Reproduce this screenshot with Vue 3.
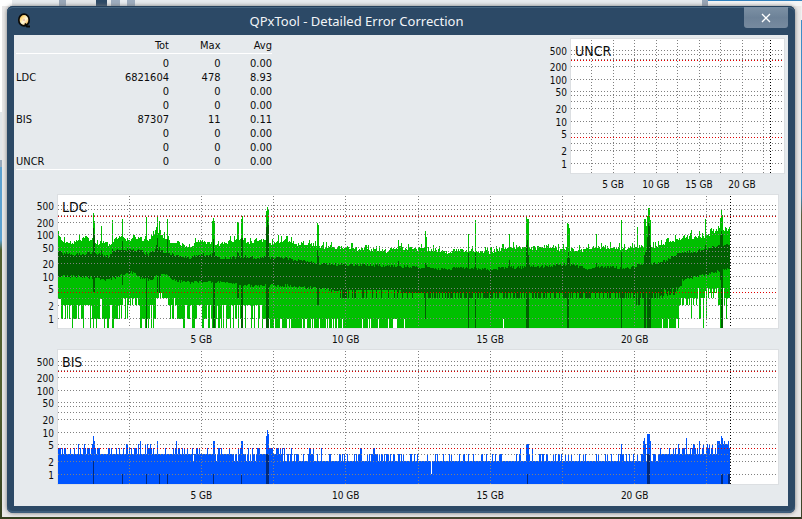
<script setup>
import { h } from 'vue'

const rows = [
  ['', '0', '0', '0.00'],
  ['LDC', '6821604', '478', '8.93'],
  ['', '0', '0', '0.00'],
  ['', '0', '0', '0.00'],
  ['BIS', '87307', '11', '0.11'],
  ['', '0', '0', '0.00'],
  ['', '0', '0', '0.00'],
  ['UNCR', '0', '0', '0.00'],
]

// Deterministic generator, so that every render draws the same scan
function generator(seed) {
  let s = seed
  return () => {
    s = (s * 1664525 + 1013904223) % 4294967296
    return s / 4294967296
  }
}

// Linear interpolation through a list of [sample, level] points
function curve(points) {
  return (x) => {
    let i = 1
    while (i < points.length - 1 && points[i][0] < x) i++
    const [x0, y0] = points[i - 1]
    const [x1, y1] = points[i]
    const t = Math.min(1, Math.max(0, (x - x0) / (x1 - x0)))
    return y0 + (y1 - y0) * t
  }
}

const bar = (x, top, bottom) => (bottom > top ? `M${x} ${top}h1V${bottom}h-1z` : '')

const SAMPLES = 672

function buildLdc() {
  const rnd = generator(77)
  const peak = curve([[0, 38], [4, 46], [12, 48], [22, 44], [29, 42], [34, 48], [40, 50], [45, 46], [50, 50], [57, 44], [64, 42], [71, 46], [75, 41], [82, 44], [88, 46], [94, 41], [100, 39], [107, 43], [112, 48], [118, 46], [124, 50], [132, 51], [137, 48], [142, 46], [154, 48], [164, 49], [172, 46], [182, 46], [190, 49], [200, 44], [214, 49], [222, 46], [232, 46], [239, 51], [245, 48], [252, 50], [267, 52], [292, 53], [302, 55], [330, 56], [340, 52], [347, 54], [367, 54], [390, 58], [400, 55], [412, 56], [432, 57], [454, 52], [474, 53], [492, 51], [498, 54], [522, 55], [542, 53], [552, 52], [567, 54], [577, 52], [597, 52], [607, 49], [614, 46], [625, 42], [632, 43], [648, 43], [653, 38], [662, 35], [668, 34], [672, 34]])
  const upper = curve([[0, 56], [4, 58], [22, 59], [34, 57], [42, 59], [50, 61], [56, 55], [72, 54], [82, 54], [89, 60], [97, 54], [105, 56], [110, 58], [120, 60], [132, 62], [142, 59], [152, 60], [164, 63], [177, 62], [192, 62], [222, 62], [234, 64], [254, 67], [267, 69], [317, 70], [367, 72], [390, 74], [402, 72], [432, 74], [452, 72], [482, 71], [507, 69], [517, 70], [527, 73], [542, 71], [557, 72], [572, 73], [580, 69], [597, 68], [607, 65], [617, 60], [622, 57], [637, 56], [647, 55], [652, 52], [662, 50], [672, 49]])
  const lower = curve([[0, 81], [17, 81], [37, 82], [47, 85], [57, 82], [67, 78], [75, 77], [82, 82], [92, 84], [100, 80], [109, 79], [115, 85], [132, 87], [152, 86], [167, 87], [182, 90], [232, 90], [244, 92], [262, 92], [272, 95], [300, 95], [340, 97], [362, 98], [597, 98], [606, 95], [617, 93], [622, 85], [632, 83], [642, 80], [652, 78], [662, 75], [672, 72]])
  const spikes = {
    35: [18, 33, 97], 36: [26, 40, 97], 43: [31, 55, 84], 54: [25, 54, 82], 64: [24, 46, 90],
    88: [22, 57, 133], 97: [35, 54, 81], 98: [32, 50, 80], 99: [22, 43, 98], 101: [26, 52, 98], 109: [24, 44, 80],
    154: [26, 58, 87], 155: [23, 44, 133], 156: [26, 57, 133],
    179: [27, 57, 103], 180: [28, 58, 103], 183: [24, 43, 133], 184: [21, 43, 133], 187: [43, 60, 90],
    208: [16, 32, 133], 209: [12, 25, 133], 210: [15, 30, 133], 220: [40, 62, 90],
    259: [28, 55, 110], 260: [30, 61, 110], 340: [45, 66, 98],
    367: [36, 68, 124], 368: [42, 70, 98], 410: [39, 58, 133], 417: [25, 58, 133], 451: [39, 65, 98],
    468: [22, 50, 133], 469: [24, 45, 133], 470: [24, 60, 133],
    509: [28, 63, 133], 510: [29, 57, 133], 511: [33, 63, 98], 538: [39, 68, 98], 563: [25, 57, 133], 579: [32, 68, 98],
    586: [24, 60, 133], 587: [24, 57, 133], 588: [31, 55, 98], 589: [21, 42, 133], 590: [13, 28, 133], 591: [13, 31, 133], 592: [25, 50, 133],
    633: [35, 56, 83], 641: [36, 54, 80], 647: [24, 50, 79], 655: [34, 51, 78],
    661: [33, 50, 77], 662: [23, 40, 85], 663: [15, 36, 133], 664: [20, 39, 133],
  }
  // [first sample, levels of the lower edge, drawn with equal chance]
  const floors = [
    [0, [104]], [3, [133, 110, 124, 110, 124]], [25, [133, 110, 110]], [34, [133, 104, 124]], [46, [133, 133, 124, 110]],
    [56, [124, 110, 110, 124]], [63, [103, 110, 124]], [70, [103, 110, 110]], [82, [124, 110, 124, 133]],
    [98, [98, 103, 103]], [110, [103, 110, 124]], [119, [124, 133, 124, 110]], [150, [133, 124, 133, 110]],
    [170, [133, 124, 110]], [208, [133, 124, 133]], [225, [133, 124, 133, 133]], [300, [133, 133, 133, 133, 133, 124]],
    [343, [133]], [604, [133, 133, 124]], [618, [133, 124, 110]], [622, [110, 103, 110]], [630, [103, 110, 124, 103]],
    [640, [96, 103, 93, 124]], [652, [98, 93, 103]], [660, [98, 93, 110]], [667, [103, 124]],
  ]
  let outer = ''
  let inner = ''
  for (let x = 0; x < SAMPLES; x++) {
    const n = rnd()
    let top = Math.round(peak(x) + (n < 0.12 ? -5 : n * 5 - 3))
    let mid = Math.round(upper(x) + rnd() * 3 - 1)
    let low = Math.round(lower(x) + rnd() * 3 - 1)
    if (x > 280 && x < 600) low = rnd() < (x < 343 ? 0.2 : 0.5) ? 103 : x < 343 ? 95 : 98
    if (x > 570 && x < 590 && rnd() < 0.25) low = 110
    if (x > 600 && x < 624 && rnd() < 0.5) low += 5
    let region = floors[0][1]
    for (const f of floors) if (f[0] <= x) region = f[1]
    let floor = region[Math.floor(rnd() * region.length)]
    if (x === 346 || x === 445) floor = 124
    if (x === 645 || x === 662) floor = 133
    if (spikes[x]) {
      top = spikes[x][0]
      mid = spikes[x][1]
      low = spikes[x][2]
    }
    outer += bar(x, top, Math.max(floor, low))
    inner += bar(x, mid, low)
  }
  return [{ color: '#00c000', d: outer }, { color: '#006000', d: inner }]
}

function buildBis() {
  const rnd = generator(5)
  // [first sample, levels of the upper edge, drawn with equal chance]
  const regions = [
    [0, [104, 104, 98, 104, 98, 104, 104, 98, 104, 94]],
    [117, [104, 104, 98, 104, 111, 104, 98, 104, 98, 104]],
    [168, [104, 111, 104, 98, 104, 111, 104]],
    [180, [104, 98, 104, 98, 104, 111, 104]],
    [227, [111, 104, 111, 104, 111, 104, 98, 111, 104]],
    [342, [111, 111, 104, 111, 111, 111]],
    [455, [111, 104, 111, 111, 98, 111, 111]],
    [482, [111, 104, 111, 111, 104, 111]],
    [594, [104, 104, 98, 111, 104, 104]],
    [617, [104, 98, 104, 98, 104, 94]],
    [648, [98, 98, 94, 98, 104]],
    [659, [94, 91, 98, 94]],
  ]
  const spikes = { 35: 86, 36: 91, 82: 91, 99: 91, 118: 91, 155: 91, 156: 91, 183: 91, 184: 91, 208: 86, 209: 80, 210: 84, 373: 124, 468: 94, 469: 94, 470: 94, 563: 94, 585: 91, 586: 88, 587: 94, 589: 84, 590: 84, 591: 84, 592: 91, 628: 88, 641: 91, 661: 91, 663: 86, 664: 88, 670: 91 }
  const cores = { 35: 111, 64: 124, 88: 124, 101: 124, 109: 124, 155: 124, 183: 124, 208: 104, 209: 104, 210: 104, 469: 124, 589: 104, 590: 104, 591: 104, 663: 124, 664: 124, 670: 124, 671: 124 }
  let outer = ''
  let inner = ''
  for (let x = 0; x < SAMPLES; x++) {
    let region = regions[0][1]
    for (const r of regions) if (r[0] <= x) region = r[1]
    const level = spikes[x] || region[Math.floor(rnd() * region.length)]
    outer += bar(x, level, 134)
    if (cores[x]) inner += bar(x, cores[x], 134)
  }
  return [{ color: '#0055ff', d: outer }, { color: '#002a80', d: inner }]
}

const levels = [500, 400, 300, 200, 100, 50, 40, 30, 20, 10, 5, 3, 2, 1]
const labelled = [500, 200, 100, 50, 20, 10, 5, 2, 1]
const ldcLines = [10, 14, 20, 27, 39, 52, 56, 61, 68, 81, 93, 103, 110, 123]
const lines = [11, 15, 20, 27, 40, 52, 56, 62, 69, 82, 94, 104, 111, 124]
const wideTicks = [71, 143, 215, 287, 360, 432, 504, 576, 648]

const uncr = { title: 'UNCR', width: 213, height: 134, lines, limits: [21, 98], ticks: [20, 42, 63, 85, 106, 128, 149, 171, 192], end: 199, layers: [] }
const ldc = { title: 'LDC', width: 720, height: 133, lines: ldcLines, limits: [21, 97], ticks: wideTicks, end: 672, layers: buildLdc() }
const bis = { title: 'BIS', width: 720, height: 134, lines, limits: [21, 98], ticks: wideTicks, end: 672, layers: buildBis() }

const ErrorChart = ({ chart }) => {
  const across = (y) => `M0 ${y + 0.5}H${chart.width - 2}`
  const down = (x) => `M${x + 0.5} 1V${chart.height}`
  return h('figure', { class: 'chart', 'aria-label': chart.title }, [
    h('svg', { class: 'scale', width: 40, height: chart.height + 2 },
      labelled.map((v) => h('text', { x: 37, y: chart.lines[levels.indexOf(v)] + 6, 'text-anchor': 'end' }, v))),
    h('div', { class: 'plot' }, [
      h('svg', { class: 'trace', height: chart.height, viewBox: `0 0 ${chart.width} ${chart.height}`, preserveAspectRatio: 'none' }, [
        ...chart.layers.map((l) => h('path', { d: l.d, fill: l.color })),
        h('path', { class: 'dots', d: chart.lines.map(across).join('') + chart.ticks.map(down).join('') }),
        h('path', { class: 'dots limit', d: chart.limits.map(across).join('') }),
        h('path', { class: 'dots end', d: down(chart.end) }),
      ]),
      h('figcaption', { class: 'caption' }, chart.title),
    ]),
    h('div', { class: 'ticks' }, ['5 GB', '10 GB', '15 GB', '20 GB'].map((t) => h('span', t))),
  ])
}
ErrorChart.props = ['chart']
</script>

<template>
  <div class="desktop">
    <div class="window">
      <header class="titlebar">
        <svg class="logo" width="14" height="16" viewBox="0 0 14 16" aria-hidden="true">
          <defs>
            <linearGradient id="disc" x1="0" y1="0" x2="1" y2="1">
              <stop offset="0" stop-color="#f0a010" />
              <stop offset="0.35" stop-color="#ffdf90" />
              <stop offset="0.55" stop-color="#fff8dc" />
              <stop offset="1" stop-color="#f09000" />
            </linearGradient>
          </defs>
          <ellipse cx="7" cy="7" rx="5.2" ry="5.8" fill="url(#disc)" stroke="#0a0805" stroke-width="1.7" />
          <path d="M8 10.5L10 13.5H13" fill="none" stroke="#0a0805" stroke-width="1.9" />
          <circle cx="7" cy="7" r="1.2" fill="#f4c8b0" />
        </svg>
        <h1>QPxTool - Detailed Error Correction</h1>
        <button class="close" type="button" aria-label="Close">
          <svg width="10" height="10" viewBox="0 0 10 10"><path d="M1 1L9 9M9 1L1 9" stroke="#fff" stroke-width="1.3" /></svg>
        </button>
      </header>
      <main class="body">
        <section class="summary">
          <table>
            <thead>
              <tr><th></th><th>Tot</th><th>Max</th><th>Avg</th></tr>
            </thead>
            <tbody>
              <tr v-for="(row, i) in rows" :key="i">
                <td v-for="(cell, j) in row" :key="j">{{ cell }}</td>
              </tr>
            </tbody>
          </table>
          <div class="small"><ErrorChart :chart="uncr" /></div>
        </section>
        <section class="wide"><ErrorChart :chart="ldc" /></section>
        <section class="wide"><ErrorChart :chart="bis" /></section>
      </main>
    </div>
  </div>
</template>

<style>
body {
  margin: 0;
}
</style>

<style scoped>
.desktop {
  box-sizing: border-box;
  min-height: 100vh;
  padding: 6px 7px;
  display: flex;
  background:
    linear-gradient(#2f80bd, #2f80bd) 100% 0 / 94px 1px no-repeat,
    linear-gradient(90deg, #fff 0 12px, #e6eaed 12px 59px, #99a7b8 59px 66px, #e3e6e8 66px 96px, #2c4966 96px 107px, #e6eaed 107px 111px, #9dadbf 111px 120px, #e8edf1 120px 127px, #9dadbf 127px 135px, #e6eaed 135px 702px, #97a5b6 702px 708px, #f4f5f6 708px) 0 0 / 100% 6px no-repeat,
    linear-gradient(#fff 0 112px, #e2e6e9 112px 160px, #97a8bb 160px 167px, #5ba0cf 167px 240px, #52602f 250px 400px, #34401f) 0 0 / 2px 100% no-repeat,
    linear-gradient(#f0f1f2 0 20px, #3c8dc8 20px 195px, #5c5f3c 215px, #3d4228) 100% 0 / 1px 100% no-repeat,
    linear-gradient(90deg, #34401f, #4b4a34 50%, #30331f) 0 100% / 100% 2px no-repeat,
    #e9e8e8;
}
.window {
  flex: 1;
  display: flex;
  flex-direction: column;
  padding: 0 7px 7px;
  border-radius: 6px;
  background: #2c4966;
  box-shadow: 0 0 4px #777, inset 0 1px #24405c, inset 0 2px #466580, inset 0 -2px #3e5d7b;
}
.titlebar {
  display: flex;
  align-items: center;
  height: 29px;
}
.logo {
  margin-left: 3px;
}
h1 {
  flex: 1;
  margin: 0;
  padding-right: 62px;
  text-align: center;
  color: #f2f5f8;
  font: 13px/20px "Noto Sans", "Open Sans", sans-serif;
}
.close {
  align-self: flex-start;
  display: flex;
  align-items: center;
  justify-content: center;
  width: 44px;
  height: 21px;
  margin-top: 1px;
  padding: 0;
  border: 0;
  border-radius: 0 0 3px 3px;
  background: linear-gradient(#7d91a5, #6d8298 50%, #768a9f);
}
.body {
  flex: 1;
  display: flex;
  flex-direction: column;
  padding: 3px 3px 0 2px;
  background: #e6eaed;
  color: #0c0c0c;
  font: 11px/14px "DejaVu Sans Condensed", "DejaVu Sans", sans-serif;
}
.summary {
  display: flex;
  align-items: flex-start;
  justify-content: space-between;
  height: 156px;
}
table {
  width: 256px;
  table-layout: fixed;
  border-spacing: 0;
  border-bottom: 1px solid #fff;
}
th,
td {
  height: 14px;
  padding: 0;
  text-align: right;
  font-weight: normal;
}
th {
  padding-top: 1px;
  border-bottom: 1px solid #fff;
}
th:first-child,
td:first-child {
  width: 88px;
  text-align: left;
}
th:nth-child(2) {
  width: 65px;
}
tbody tr:first-child td {
  padding-top: 3px;
}
.small {
  width: 255px;
}
.wide {
  padding: 0 6px 0 1px;
  height: 155px;
}
:deep(.chart) {
  margin: 0;
  display: grid;
  grid-template-columns: 40px 1fr;
}
:deep(.scale),
:deep(.ticks) {
  font-size: 10px;
  fill: #0c0c0c;
}
:deep(.plot) {
  position: relative;
  border: 1px solid #dcdfe2;
  background: #fff;
}
:deep(.trace) {
  display: block;
  width: 100%;
  shape-rendering: crispEdges;
}
:deep(.dots) {
  fill: none;
  stroke: #808080;
  stroke-dasharray: 1 2;
}
:deep(.limit) {
  stroke: #e00000;
}
:deep(.end) {
  stroke: #000;
}
:deep(.caption) {
  position: absolute;
  top: 3px;
  left: 4px;
  font-size: 14px;
  line-height: 18px;
}
:deep(.ticks) {
  grid-column: 2;
  display: flex;
  padding: 4px 10% 0;
}
:deep(.ticks span) {
  flex: 1;
  text-align: center;
}
</style>
